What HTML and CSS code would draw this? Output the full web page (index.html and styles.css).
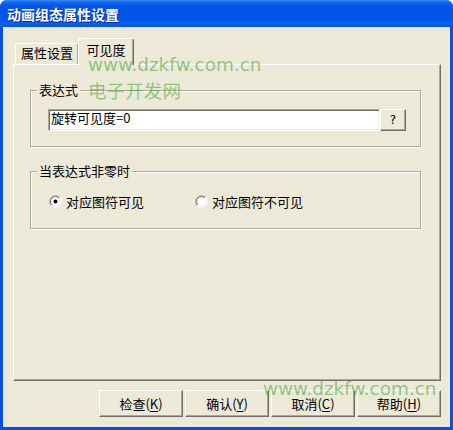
FILE: index.html
```html
<!DOCTYPE html>
<html lang="zh-CN">
<head>
<meta charset="utf-8">
<title>动画组态属性设置</title>
<link rel="stylesheet" href="styles.css">
</head>
<body>
<div class="window">
  <div class="titlebar"><span class="title">动画组态属性设置</span></div>
  <div class="client">
    <div class="tabs">
      <div class="tab">属性设置</div>
      <div class="tab active">可见度</div>
    </div>
    <div class="panel">
      <div class="group g1">
        <span class="legend">表达式</span>
        <div class="exprrow">
          <div class="field">旋转可见度=0</div>
          <div class="btn qbtn">?</div>
        </div>
      </div>
      <div class="group g2">
        <span class="legend">当表达式非零时</span>
        <div class="radios">
          <div class="radio first">
            <svg class="rb" width="13" height="13" viewBox="0 0 13 13">
              <circle cx="6.5" cy="6.5" r="5" fill="#fff"/>
              <path d="M2.26 10.74 A6 6 0 0 1 10.74 2.26" stroke="#ACA899" fill="none"/>
              <path d="M10.74 2.26 A6 6 0 0 1 2.26 10.74" stroke="#fff" fill="none"/>
              <path d="M2.96 10.04 A5 5 0 0 1 10.04 2.96" stroke="#716F64" fill="none"/>
              <path d="M10.04 2.96 A5 5 0 0 1 2.96 10.04" stroke="#F1EFE2" fill="none"/>
              <circle cx="6.5" cy="6.5" r="2" fill="#000"/>
            </svg>
            <span>对应图符可见</span>
          </div>
          <div class="radio">
            <svg class="rb" width="13" height="13" viewBox="0 0 13 13">
              <circle cx="6.5" cy="6.5" r="5" fill="#fff"/>
              <path d="M2.26 10.74 A6 6 0 0 1 10.74 2.26" stroke="#ACA899" fill="none"/>
              <path d="M10.74 2.26 A6 6 0 0 1 2.26 10.74" stroke="#fff" fill="none"/>
              <path d="M2.96 10.04 A5 5 0 0 1 10.04 2.96" stroke="#716F64" fill="none"/>
              <path d="M10.04 2.96 A5 5 0 0 1 2.96 10.04" stroke="#F1EFE2" fill="none"/>
            </svg>
            <span>对应图符不可见</span>
          </div>
        </div>
      </div>
    </div>
    <div class="buttons">
      <div class="btn dbtn">检查(<u>K</u>)</div>
      <div class="btn dbtn">确认(<u>Y</u>)</div>
      <div class="btn dbtn">取消(<u>C</u>)</div>
      <div class="btn dbtn">帮助(<u>H</u>)</div>
    </div>
    <div class="wm wm1">www.dzkfw.com.cn</div>
    <div class="wm wm2">电子开发网</div>
    <div class="wm wm3">www.dzkfw.com.cn</div>
  </div>
</div>
</body>
</html>
```
FILE: styles.css
```css
* { box-sizing: border-box; }
html, body { margin: 0; padding: 0; }
body {
  width: 453px;
  height: 430px;
  background: #ffffff;
  font-family: "Noto Sans CJK SC", "DejaVu Sans", sans-serif;
  font-size: 13px;
  color: #000;
}
.window {
  width: 453px;
  height: 430px;
  display: flex;
  flex-direction: column;
  background: #0A4FE0;
  border-radius: 7px 7px 0 0;
  overflow: hidden;
}
.titlebar {
  height: 27px;
  flex: none;
  display: flex;
  align-items: center;
  padding-left: 7px;
  background: linear-gradient(to bottom, #3A8CF6 0%, #1668F0 8%, #0457EA 20%, #0054E3 50%, #0058E8 75%, #0B63F0 88%, #0050DC 100%);
}
.title {
  color: #fff;
  font-weight: bold;
  font-size: 14px;
  line-height: 14px;
  text-shadow: 1px 1px 0 #0A2A8C;
}
.client {
  flex: 1;
  margin: 0 3px 3px;
  background: #ECE9D8;
  position: relative;
  padding: 11px 9px 0 10px;
  display: flex;
  flex-direction: column;
}
.tabs {
  height: 26px;
  flex: none;
  display: flex;
  align-items: flex-end;
  padding-left: 2px;
}
.tab {
  background: #ECE9D8;
  border-top: 1px solid #fff;
  border-left: 1px solid #fff;
  border-right: 1px solid #716F64;
  box-shadow: inset -1px 0 0 #ACA899;
  border-radius: 3px 3px 0 0;
  line-height: 13px;
  text-align: center;
}
.tab:first-child {
  width: 64px;
  height: 21px;
  padding-top: 2px;
}
.tab.active {
  width: 56px;
  height: 27px;
  margin-left: -1px;
  margin-bottom: -1px;
  padding-top: 4px;
  position: relative;
  z-index: 2;
}
.panel {
  height: 317px;
  flex: none;
  border-top: 1px solid #fff;
  border-left: 1px solid #fff;
  border-right: 1px solid #716F64;
  border-bottom: 1px solid #716F64;
  box-shadow: inset -1px -1px 0 #ACA899;
  padding: 25px 0 0 16px;
}
.group {
  position: relative;
  width: 391px;
  border: 1px solid #ACA899;
  box-shadow: inset 1px 1px 0 #fff, 1px 1px 0 #fff;
}
.g1 {
  height: 57px;
  padding: 18px 0 0 17px;
}
.g2 {
  height: 58px;
  margin-top: 24px;
  padding: 23px 0 0 18px;
}
.legend {
  position: absolute;
  left: 6px;
  top: -8px;
  padding: 0 2px;
  background: #ECE9D8;
  line-height: 13px;
}
.exprrow {
  display: flex;
}
.field {
  width: 332px;
  height: 22px;
  background: #fff;
  border: 1px solid;
  border-color: #ACA899 #fff #fff #ACA899;
  box-shadow: inset 1px 1px 0 #716F64, inset -1px -1px 0 #F1EFE2;
  padding: 1px 0 0 2px;
  line-height: 13px;
}
.btn {
  background: #ECE9D8;
  border: 1px solid;
  border-color: #fff #716F64 #716F64 #fff;
  box-shadow: inset -1px -1px 0 #ACA899;
  display: flex;
  align-items: center;
  justify-content: center;
  line-height: 13px;
}
.qbtn {
  width: 26px;
  height: 22px;
  font-family: "DejaVu Sans", sans-serif;
  font-size: 12px;
  padding-top: 1px;
}
.radios {
  display: flex;
}
.radio {
  display: flex;
  align-items: center;
  gap: 4px;
  line-height: 13px;
}
.radio.first {
  width: 146px;
}
.rb {
  flex: none;
  display: block;
}
.buttons {
  display: flex;
  justify-content: flex-end;
  gap: 2px;
  margin-top: 9px;
}
.dbtn {
  width: 84px;
  height: 27px;
}
.dbtn u {
  text-decoration: underline;
  text-underline-offset: 2px;
}
.wm {
  position: absolute;
  color: rgba(60, 165, 40, 0.55);
  white-space: nowrap;
  pointer-events: none;
  z-index: 5;
}
.wm1, .wm3 {
  font-family: "DejaVu Sans", sans-serif;
  font-size: 18.4px;
  line-height: 18px;
}
.wm1 { left: 85px; top: 29px; }
.wm3 { left: 260px; top: 353px; }
.wm2 {
  left: 85px;
  top: 53px;
  font-family: "Noto Sans CJK SC", sans-serif;
  font-size: 18.6px;
  line-height: 19px;
}
```
